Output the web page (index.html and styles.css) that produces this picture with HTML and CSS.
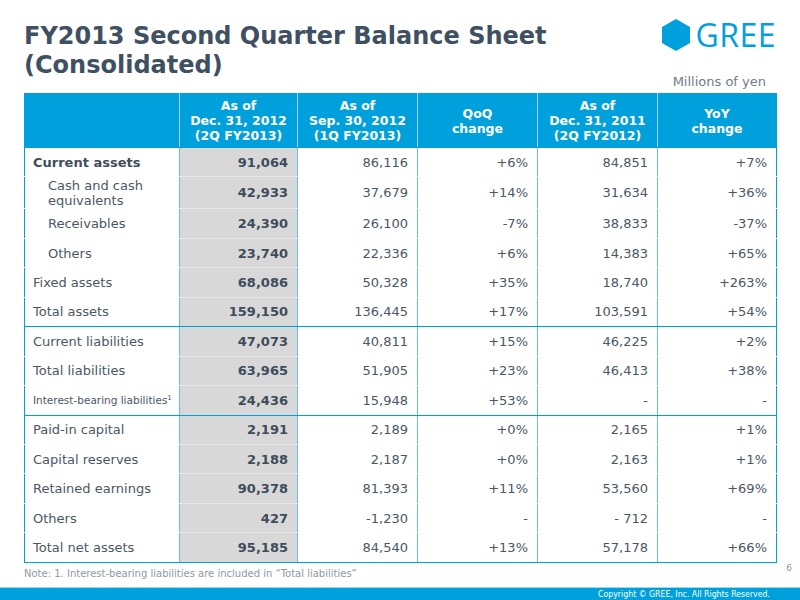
FILE: index.html
```html
<!DOCTYPE html>
<html>
<head>
<meta charset="utf-8">
<link rel="stylesheet" href="styles.css">
</head>
<body>
<div class="slide">
  <header class="top">
    <h1 class="title">FY2013 Second Quarter Balance Sheet<br>(Consolidated)</h1>
    <div class="brand">
      <div class="logo">
        <svg class="hex" width="30" height="32" viewBox="0 0 30 32"><polygon points="15,0 29,8 29,24 15,32 1,24 1,8" fill="#00a0dc"/></svg>
        <span class="logo-text">GREE</span>
      </div>
      <div class="unit">Millions of yen</div>
    </div>
  </header>

  <table class="bs">
    <colgroup>
      <col class="c-label"><col class="c-num"><col class="c-num2"><col class="c-num2"><col class="c-num2"><col class="c-num3">
    </colgroup>
    <thead>
      <tr>
        <th></th>
        <th>As of<br>Dec. 31, 2012<br>(2Q FY2013)</th>
        <th>As of<br>Sep. 30, 2012<br>(1Q FY2013)</th>
        <th>QoQ<br>change</th>
        <th>As of<br>Dec. 31, 2011<br>(2Q FY2012)</th>
        <th>YoY<br>change</th>
      </tr>
    </thead>
    <tbody>
      <tr><td class="lbl strong">Current assets</td><td class="cur">91,064</td><td>86,116</td><td>+6%</td><td>84,851</td><td>+7%</td></tr>
      <tr class="tall"><td class="lbl sub">Cash and cash equivalents</td><td class="cur">42,933</td><td>37,679</td><td>+14%</td><td>31,634</td><td>+36%</td></tr>
      <tr><td class="lbl sub">Receivables</td><td class="cur">24,390</td><td>26,100</td><td>-7%</td><td>38,833</td><td>-37%</td></tr>
      <tr><td class="lbl sub">Others</td><td class="cur">23,740</td><td>22,336</td><td>+6%</td><td>14,383</td><td>+65%</td></tr>
      <tr><td class="lbl">Fixed assets</td><td class="cur">68,086</td><td>50,328</td><td>+35%</td><td>18,740</td><td>+263%</td></tr>
      <tr class="end"><td class="lbl">Total assets</td><td class="cur">159,150</td><td>136,445</td><td>+17%</td><td>103,591</td><td>+54%</td></tr>
      <tr><td class="lbl">Current liabilities</td><td class="cur">47,073</td><td>40,811</td><td>+15%</td><td>46,225</td><td>+2%</td></tr>
      <tr><td class="lbl">Total liabilities</td><td class="cur">63,965</td><td>51,905</td><td>+23%</td><td>46,413</td><td>+38%</td></tr>
      <tr class="end"><td class="lbl small">Interest-bearing liabilities<sup>1</sup></td><td class="cur">24,436</td><td>15,948</td><td>+53%</td><td>-</td><td>-</td></tr>
      <tr><td class="lbl">Paid-in capital</td><td class="cur">2,191</td><td>2,189</td><td>+0%</td><td>2,165</td><td>+1%</td></tr>
      <tr><td class="lbl">Capital reserves</td><td class="cur">2,188</td><td>2,187</td><td>+0%</td><td>2,163</td><td>+1%</td></tr>
      <tr><td class="lbl">Retained earnings</td><td class="cur">90,378</td><td>81,393</td><td>+11%</td><td>53,560</td><td>+69%</td></tr>
      <tr><td class="lbl">Others</td><td class="cur">427</td><td>-1,230</td><td>-</td><td>- 712</td><td>-</td></tr>
      <tr class="last"><td class="lbl">Total net assets</td><td class="cur">95,185</td><td>84,540</td><td>+13%</td><td>57,178</td><td>+66%</td></tr>
    </tbody>
  </table>

  <div class="bottom">
    <p class="note">Note: 1. Interest-bearing liabilities are included in “Total liabilities”</p>
    <span class="page">6</span>
  </div>

  <footer class="foot">Copyright © GREE, Inc. All Rights Reserved.</footer>
</div>
</body>
</html>
```

FILE: styles.css
```css
html, body {
  margin: 0;
  padding: 0;
  background: #ffffff;
}

.slide {
  width: 800px;
  height: 600px;
  font-family: "DejaVu Sans", Verdana, sans-serif;
  color: #4a5765;
  display: flex;
  flex-direction: column;
  overflow: hidden;
}

.top {
  height: 93px;
  display: flex;
  justify-content: space-between;
  flex-shrink: 0;
}

.title {
  margin: 0;
  padding: 22px 0 0 24px;
  font-size: 24px;
  line-height: 29px;
  font-weight: bold;
  color: #3f5062;
}

.brand {
  padding: 19px 24px 0 0;
  display: flex;
  flex-direction: column;
  align-items: flex-end;
}

.logo {
  display: flex;
  align-items: center;
  gap: 4px;
  height: 32px;
}

.hex {
  display: block;
}

.logo-text {
  font-family: "Open Sans", "DejaVu Sans", sans-serif;
  font-size: 32px;
  line-height: 32px;
  color: #00a0dc;
  letter-spacing: 0.5px;
}

.unit {
  margin-top: 23px;
  padding-right: 10px;
  font-size: 13px;
  line-height: 16px;
  color: #6f7d8b;
}

.bs {
  margin-left: 24px;
  width: 752px;
  border-collapse: collapse;
  table-layout: fixed;
  font-size: 13px;
  flex-shrink: 0;
}

.c-label { width: 155px; }
.c-num { width: 118px; }
.c-num2 { width: 120px; }
.c-num3 { width: 119px; }

.bs th {
  background: #00a0dc;
  color: #ffffff;
  font-weight: bold;
  font-size: 12.5px;
  line-height: 15px;
  height: 53px;
  padding: 0;
  text-align: center;
  vertical-align: middle;
  border: 1px solid #00a0dc;
  border-left-color: #9fd8f1;
  border-right-color: #9fd8f1;
}

.bs th:first-child { border-left-color: #00a0dc; }
.bs th:last-child { border-right-color: #00a0dc; }

.bs td {
  height: 28.45px;
  padding: 0 9px 0 8px;
  text-align: right;
  vertical-align: middle;
  line-height: 15px;
  border-left: 1px solid #62c0ea;
  border-right: 1px solid #62c0ea;
  border-bottom: 1px solid #ffffff;
}

.bs td:first-child { border-left-color: #00a0dc; }
.bs td:nth-child(2) { border-left-color: #00a0dc; }
.bs td:last-child { border-right-color: #00a0dc; }

.bs tr.tall td { height: 31px; }

.bs tr.end td,
.bs tr.last td {
  border-bottom: 1px solid #00a0dc;
}

.bs td.lbl {
  text-align: left;
  padding-left: 8px;
  padding-right: 4px;
}

.bs td.strong { font-weight: bold; color: #3f4d5c; }
.bs td.sub { padding-left: 23px; }
.bs td.small { font-size: 10.5px; padding-right: 0; white-space: nowrap; }
.bs td.small sup { font-size: 7px; line-height: 0; }

.bs td.cur {
  background: #d8d8d8;
  font-weight: bold;
  color: #3f4c5a;
  border-bottom-color: #e6e6e6;
}

.bs tr.end td.cur,
.bs tr.last td.cur {
  border-bottom-color: #00a0dc;
}

.bottom {
  position: relative;
  height: 24px;
  flex-shrink: 0;
}

.note {
  margin: 0;
  padding: 5px 0 0 24px;
  font-size: 10px;
  line-height: 12px;
  color: #8c9aa6;
}

.page {
  position: absolute;
  right: 8px;
  top: 0;
  font-size: 9px;
  color: #8c9aa6;
}

.foot {
  margin-top: auto;
  flex-shrink: 0;
  height: 13px;
  border-top: 1px solid #9fd6ee;
  background: #00a0dc;
  color: #ffffff;
  font-family: "DejaVu Sans Condensed", "DejaVu Sans", sans-serif;
  font-size: 8.7px;
  line-height: 13px;
  text-align: right;
  padding-right: 30px;
}
```
